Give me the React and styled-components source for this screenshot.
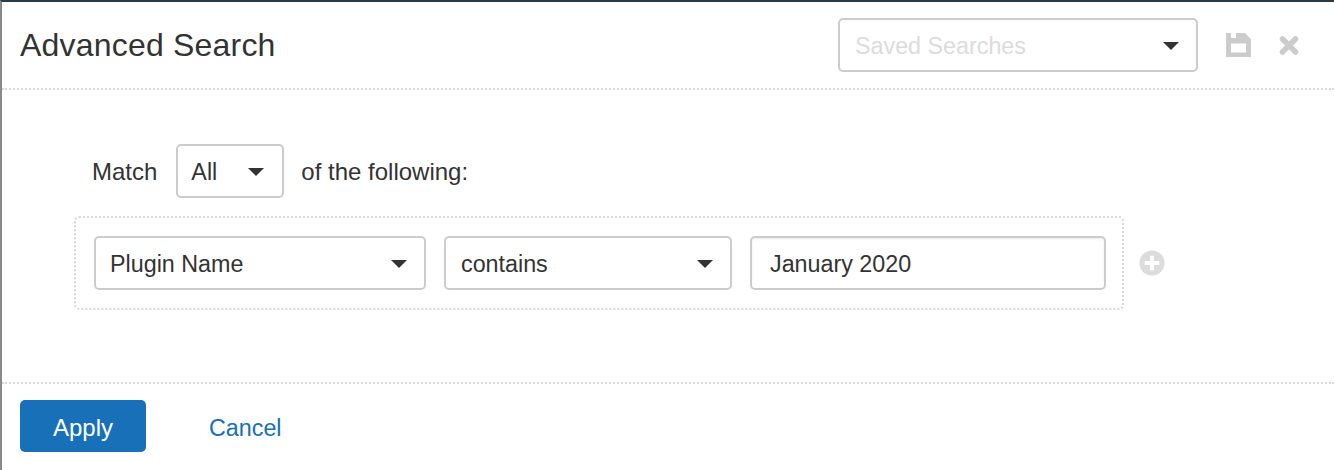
import React from 'react';
import styled, { createGlobalStyle } from 'styled-components';
import { FaPlusCircle } from 'react-icons/fa';

const GlobalStyle = createGlobalStyle`
	html, body {
		margin: 0;
		background: #fff;
	}
	body {
		font-family: "Liberation Sans", Arial, sans-serif;
		color: #333;
	}
	* {
		box-sizing: border-box;
	}
`;

const Modal = styled.div`
	width: 1334px;
	height: 470px;
	overflow: hidden;
	display: flex;
	flex-direction: column;
	border-top: 2px solid #2b3a4a;
	border-left: 2px solid #8a8a8a;
	background: #fff;
`;

const Header = styled.header`
	height: 88px;
	flex: none;
	display: flex;
	align-items: center;
	padding: 0 35px 0 18px;
	border-bottom: 2px dotted #d8d8d8;
`;

const Title = styled.h1`
	flex: 1;
	margin: 0;
	font-size: 32px;
	letter-spacing: 0.2px;
	font-weight: 400;
	color: #333;
`;

const SelectBox = styled.div`
	width: ${(p) => p.$width}px;
	height: 54px;
	flex: none;
	display: flex;
	align-items: center;
	justify-content: space-between;
	padding: 2px ${(p) => p.$padRight || 17}px 0 ${(p) => p.$padLeft || 14}px;
	background: #fff;
	border: 2px solid #ccc;
	border-radius: 5px;
	font-size: 23.3px;
	color: ${(p) => (p.$placeholder ? '#dcdcdc' : '#333')};
`;

const Caret = styled.span`
	width: 0;
	height: 0;
	border-left: 8px solid transparent;
	border-right: 8px solid transparent;
	border-top: 8px solid #333;
`;

const ToolIcon = styled.svg`
	display: block;
	flex: none;
	margin-left: ${(p) => p.$gap}px;
	color: #ccc;
`;

const Body = styled.main`
	flex: 1;
	padding: 54px 0 0 72px;
`;

const MatchRow = styled.div`
	display: flex;
	align-items: center;
	padding-left: 18px;
	font-size: 24px;
	color: #333;
`;

const MatchLabel = styled.span`
	margin-right: 19px;
	padding-top: 2px;
`;

const MatchTail = styled.span`
	margin-left: 17px;
	padding-top: 2px;
`;

const RuleLine = styled.div`
	display: flex;
	align-items: center;
	margin-top: 18px;
`;

const RuleGroup = styled.div`
	width: 1050px;
	height: 94px;
	flex: none;
	display: flex;
	align-items: center;
	gap: 18px;
	padding: 0 16px 0 18px;
	border: 2px dotted #d8d8d8;
	border-radius: 5px;
`;

const ValueInput = styled.div`
	width: 356px;
	height: 54px;
	flex: none;
	display: flex;
	align-items: center;
	padding: 2px 18px 0;
	border: 2px solid #ccc;
	border-radius: 5px;
	box-shadow: inset 0 1px 2px rgba(0, 0, 0, 0.08);
	font-size: 23.3px;
	color: #333;
`;

const AddIcon = styled.span`
	display: flex;
	margin-left: 15px;
	color: #dcdcdc;
	font-size: 26px;
`;

const Footer = styled.footer`
	height: 88px;
	flex: none;
	display: flex;
	align-items: flex-start;
	padding: 16px 0 0 18px;
	border-top: 2px dotted #d8d8d8;
`;

const ApplyButton = styled.button`
	width: 126px;
	height: 52px;
	padding: 3px 0 0;
	border: 0;
	border-radius: 5px;
	background: #1770b8;
	color: #fff;
	font-family: inherit;
	font-size: 24px;
`;

const CancelLink = styled.a`
	margin-left: 63px;
	line-height: 56px;
	font-size: 23.3px;
	color: #1770b8;
`;

const App = () => (
	<>
		<GlobalStyle />
		<Modal>
			<Header>
				<Title>Advanced Search</Title>
				<SelectBox $width={360} $padLeft={15} $placeholder>
					Saved Searches
					<Caret />
				</SelectBox>
				<ToolIcon $gap={28} width="25" height="24" viewBox="0 0 25 24">
					<path
						fill="currentColor"
						fillRule="evenodd"
						d="M0 0H5V5H10V0H19L25 6V24H0ZM5 10.5V19.5H20V10.5Z"
					/>
				</ToolIcon>
				<ToolIcon $gap={28} width="20" height="21" viewBox="0 0 20 21">
					<path
						fill="none"
						stroke="currentColor"
						strokeWidth="5.5"
						strokeLinecap="round"
						d="M3.5 4L16.5 17M16.5 4L3.5 17"
					/>
				</ToolIcon>
			</Header>
			<Body>
				<MatchRow>
					<MatchLabel>Match</MatchLabel>
					<SelectBox $width={108} $padLeft={13} $padRight={18}>
						All
						<Caret />
					</SelectBox>
					<MatchTail>of the following:</MatchTail>
				</MatchRow>
				<RuleLine>
					<RuleGroup>
						<SelectBox $width={332}>
							Plugin Name
							<Caret />
						</SelectBox>
						<SelectBox $width={288} $padLeft={15}>
							contains
							<Caret />
						</SelectBox>
						<ValueInput>January 2020</ValueInput>
					</RuleGroup>
					<AddIcon><FaPlusCircle /></AddIcon>
				</RuleLine>
			</Body>
			<Footer>
				<ApplyButton>Apply</ApplyButton>
				<CancelLink>Cancel</CancelLink>
			</Footer>
		</Modal>
	</>
);

export default App;
